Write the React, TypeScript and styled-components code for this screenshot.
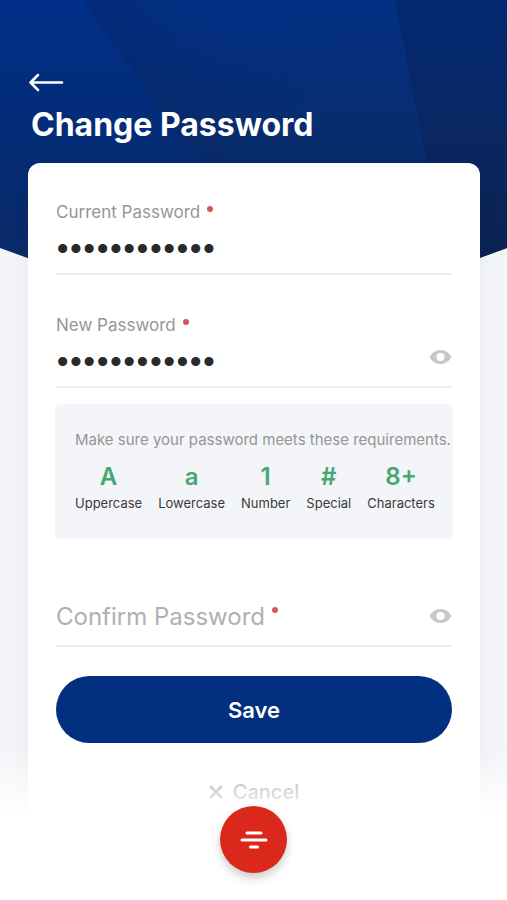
import React, { useId, useState } from "react";
import styled, { createGlobalStyle, css } from "styled-components";

const GlobalStyle = createGlobalStyle`
  *, *::before, *::after { box-sizing: border-box; }
  body { margin: 0; background: #ffffff; }
  button, input { font: inherit; }
`;

const Page = styled.div`
  position: relative;
  isolation: isolate;
  display: flex;
  flex-direction: column;
  min-height: 100vh;
  overflow: hidden;
  background: #f3f5f8;
  font-family: Inter, "Liberation Sans", sans-serif;
  color: #2a2a2a;
`;

const Backdrop = styled.svg`
  position: absolute;
  z-index: -1;
  top: 0;
  left: 0;
  width: 100%;
  height: 340px;
`;

const Header = styled.header`
  display: flex;
  flex-direction: column;
  align-items: flex-start;
  gap: 9px;
  padding: 68px 28px 18px;
`;

const IconButton = styled.button`
  display: flex;
  padding: 0;
  border: 0;
  background: none;
  cursor: pointer;
`;

const BackButton = styled(IconButton)`
  padding: 4px 0;
`;

const Title = styled.h1`
  margin: 0;
  padding: 0 3px;
  font-size: 32px;
  line-height: 40px;
  font-weight: 700;
  color: #ffffff;
`;

const Card = styled.form`
  display: flex;
  flex: 1;
  flex-direction: column;
  margin: 0 27px 0 28px;
  padding: 37px 28px 96px;
  border-radius: 12px 12px 0 0;
  background: #ffffff;
  box-shadow: 0 8px 24px rgba(20, 30, 60, 0.05);
`;

const FieldBox = styled.div<{ $floating: boolean }>`
  display: grid;
  grid-template-columns: 1fr auto;
  align-items: center;
  border-bottom: 2px solid #ededee;

  & + & {
    margin-top: 38px;
  }

  ${(p) =>
    !p.$floating &&
    css`
      margin-top: 57px;
    `}
`;

const FieldLabel = styled.label<{ $floating: boolean }>`
  display: flex;
  align-items: flex-start;
  grid-column: 1;
  grid-row: ${(p) => (p.$floating ? 1 : 2)};
  gap: 7px;
  margin-bottom: ${(p) => (p.$floating ? 0 : 8)}px;
  font-size: ${(p) => (p.$floating ? 17 : 24)}px;
  line-height: ${(p) => (p.$floating ? 24 : 32)}px;
  color: ${(p) => (p.$floating ? "#969696" : "#b0b0b0")};
  pointer-events: none;
`;

const RequiredDot = styled.span`
  width: 6px;
  height: 6px;
  margin-top: 6px;
  border-radius: 50%;
  background: #d4575c;
`;

const PasswordInput = styled.input`
  grid-column: 1;
  grid-row: 2;
  width: 100%;
  min-width: 0;
  height: 49px;
  padding: 0;
  border: 0;
  outline: 0;
  background: transparent;
  font-size: 20px;
  color: #2a2a2a;

  &[type="password"] {
    font-family: "Liberation Serif", serif;
    font-size: 38px;
  }
`;

const RevealButton = styled(IconButton)`
  grid-column: 2;
  grid-row: 2;
  margin-bottom: 10px;
`;

const Requirements = styled.section`
  margin: 16px -1px 0;
  padding: 26px 0 25px 20px;
  border-radius: 6px;
  background: #f3f5f8;
`;

const Hint = styled.p`
  margin: 0 0 11px;
  font-size: 15px;
  line-height: 20px;
  color: #969696;
`;

const RuleList = styled.ul`
  display: flex;
  flex-wrap: wrap;
  gap: 16px;
  margin: 0;
  padding: 0;
  list-style: none;
`;

const Rule = styled.li`
  display: flex;
  flex-direction: column;
  align-items: center;
  font-size: 13px;
  line-height: 21px;
  color: #3a3a3c;
`;

const RuleSymbol = styled.strong`
  font-size: 24px;
  line-height: 32px;
  font-weight: 600;
  color: #47a772;
`;

const SaveButton = styled.button`
  height: 67px;
  margin-top: 29px;
  border: 0;
  border-radius: 34px;
  background: #022f80;
  font-size: 22px;
  font-weight: 600;
  color: #ffffff;
  cursor: pointer;
`;

const CancelButton = styled(IconButton)`
  align-items: center;
  align-self: center;
  gap: 10px;
  margin-top: 35px;
  font-size: 20px;
  line-height: 28px;
  font-weight: 500;
  color: #8a8a8a;
`;

const BottomBar = styled.nav`
  position: fixed;
  inset: auto 0 0;
  display: flex;
  justify-content: center;
  padding: 62px 0 27px;
  background: linear-gradient(rgba(255, 255, 255, 0), #ffffff 72px);
  pointer-events: none;
`;

const MenuButton = styled(IconButton)`
  align-items: center;
  justify-content: center;
  width: 67px;
  height: 67px;
  border-radius: 50%;
  background: #da291c;
  box-shadow: 0 5px 10px rgba(0, 0, 0, 0.2);
  pointer-events: auto;
`;

function HeaderBackdrop() {
  return (
    <Backdrop viewBox="0 0 507 340" preserveAspectRatio="none" aria-hidden="true">
      <defs>
        <linearGradient id="base" x1="0" y1="0" x2="0" y2="1">
          <stop offset="0" stopColor="#022f87" />
          <stop offset="0.25" stopColor="#022d7e" />
          <stop offset="0.75" stopColor="#0b2a68" />
        </linearGradient>
        <linearGradient id="middle" gradientUnits="userSpaceOnUse" x1="130" y1="130" x2="330" y2="20">
          <stop offset="0" stopColor="#042468" stopOpacity="0.6" />
          <stop offset="0.6" stopColor="#042f7e" stopOpacity="0.3" />
          <stop offset="1" stopColor="#06317e" stopOpacity="0.4" />
        </linearGradient>
        <linearGradient id="shade" gradientUnits="userSpaceOnUse" x1="0" y1="20" x2="0" y2="160">
          <stop offset="0" stopColor="#0a2b68" stopOpacity="0" />
          <stop offset="1" stopColor="#0a2b68" stopOpacity="0.8" />
        </linearGradient>
        <linearGradient id="side" x1="0" y1="0" x2="0" y2="1">
          <stop offset="0" stopColor="#022873" />
          <stop offset="0.5" stopColor="#0a2761" />
          <stop offset="1" stopColor="#0c2350" />
        </linearGradient>
      </defs>
      <path d="M0 0H507V248L253 340L0 248Z" fill="url(#base)" />
      <path d="M83 0H395L428 170V277L253 340L210 170Q155 115 136 75Z" fill="url(#middle)" />
      <path d="M83 0H395L428 170V277L253 340L210 170Q155 115 136 75Z" fill="url(#shade)" />
      <path d="M395 0H507V248L438 273L428 170Z" fill="url(#side)" />
    </Backdrop>
  );
}

function EyeIcon() {
  return (
    <svg width="23" height="16" viewBox="0 0 23 16" aria-hidden="true">
      <path
        fillRule="evenodd"
        fill="#c7c7cc"
        d="M0.5 8C3 3.5 7 1 11.5 1S20 3.5 22.5 8C20 12.5 16 15 11.5 15S3 12.5 0.5 8ZM11.5 4a4 4 0 1 0 0 8a4 4 0 1 0 0-8Z"
      />
    </svg>
  );
}

interface FieldProps {
  label: string;
  initial?: string;
  revealable?: boolean;
}

function PasswordField({ label, initial = "", revealable = false }: FieldProps) {
  const id = useId();
  const [value, setValue] = useState(initial);
  const [focused, setFocused] = useState(false);
  const [shown, setShown] = useState(false);
  const floating = focused || value !== "";

  return (
    <FieldBox $floating={floating}>
      <FieldLabel htmlFor={id} $floating={floating}>
        {label}
        <RequiredDot />
      </FieldLabel>
      <PasswordInput
        id={id}
        type={shown ? "text" : "password"}
        value={value}
        required
        onChange={(e) => setValue(e.target.value)}
        onFocus={() => setFocused(true)}
        onBlur={() => setFocused(false)}
      />
      {revealable && (
        <RevealButton type="button" aria-label={`Show ${label}`} onClick={() => setShown(!shown)}>
          <EyeIcon />
        </RevealButton>
      )}
    </FieldBox>
  );
}

const rules = [
  { symbol: "A", name: "Uppercase" },
  { symbol: "a", name: "Lowercase" },
  { symbol: "1", name: "Number" },
  { symbol: "#", name: "Special" },
  { symbol: "8+", name: "Characters" },
];

export default function App() {
  return (
    <>
      <GlobalStyle />
      <Page>
        <HeaderBackdrop />
        <Header>
          <BackButton type="button" aria-label="Back">
            <svg width="36" height="20" viewBox="0 0 36 20" fill="none" stroke="#ffffff" strokeWidth="2.5" strokeLinecap="round" strokeLinejoin="round" aria-hidden="true">
              <path d="M10 3L2.5 10.5L10 18" />
              <path d="M3 10.5H34" />
            </svg>
          </BackButton>
          <Title>Change Password</Title>
        </Header>
        <Card onSubmit={(e) => e.preventDefault()}>
          <PasswordField label="Current Password" initial="Abcdefgh123#" />
          <PasswordField label="New Password" initial="Abcdefgh456#" revealable />
          <Requirements>
            <Hint>Make sure your password meets these requirements.</Hint>
            <RuleList>
              {rules.map((rule) => (
                <Rule key={rule.name}>
                  <RuleSymbol>{rule.symbol}</RuleSymbol>
                  {rule.name}
                </Rule>
              ))}
            </RuleList>
          </Requirements>
          <PasswordField label="Confirm Password" revealable />
          <SaveButton type="submit">Save</SaveButton>
          <CancelButton type="button">
            <svg width="14" height="14" viewBox="0 0 14 14" stroke="currentColor" strokeWidth="2.5" aria-hidden="true">
              <path d="M1 1L13 13M13 1L1 13" />
            </svg>
            Cancel
          </CancelButton>
        </Card>
        <BottomBar>
          <MenuButton type="button" aria-label="Menu">
            <svg width="28" height="20" viewBox="0 0 28 20" fill="none" stroke="#ffffff" strokeWidth="3" strokeLinecap="round" aria-hidden="true">
              <path d="M7 3H21M2 10H26M10.5 17H17.5" />
            </svg>
          </MenuButton>
        </BottomBar>
      </Page>
    </>
  );
}
